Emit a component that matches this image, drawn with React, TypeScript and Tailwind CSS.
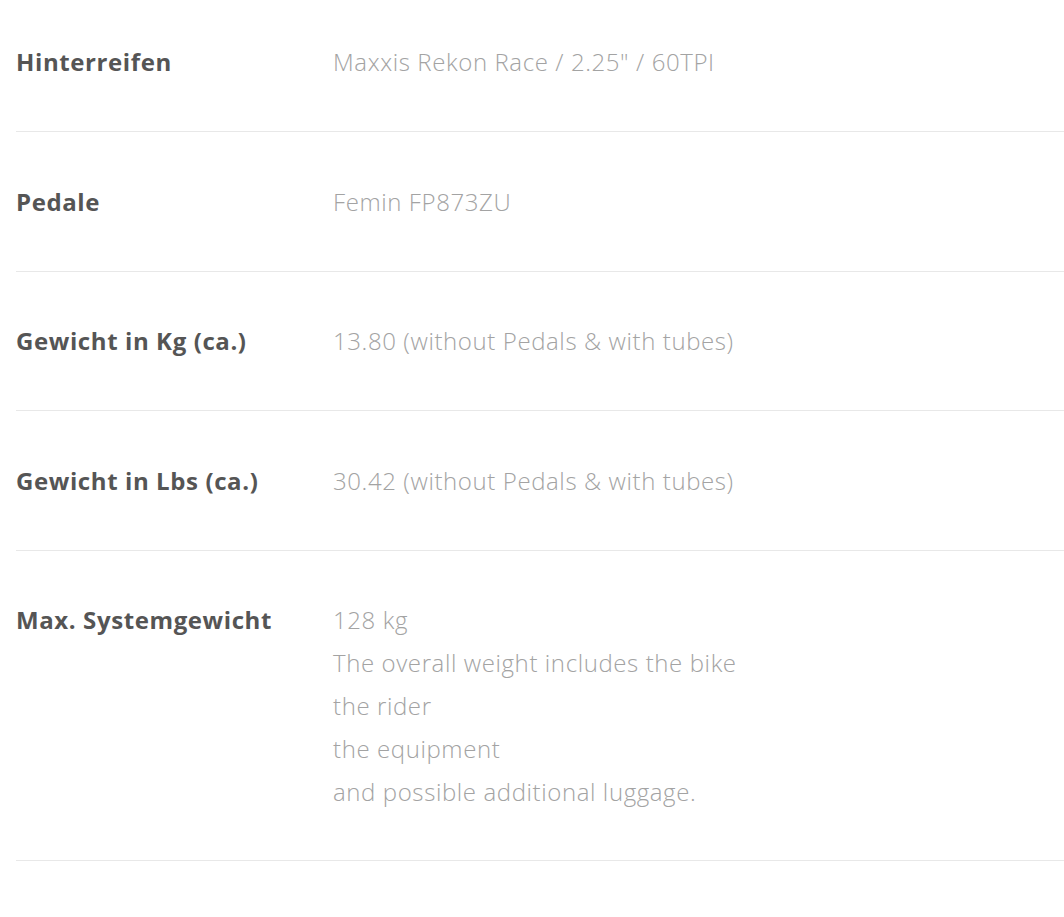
const rows: { label: string; value: string[] }[] = [
  { label: "Hinterreifen", value: ['Maxxis Rekon Race / 2.25" / 60TPI'] },
  { label: "Pedale", value: ["Femin FP873ZU"] },
  { label: "Gewicht in Kg (ca.)", value: ["13.80 (without Pedals & with tubes)"] },
  { label: "Gewicht in Lbs (ca.)", value: ["30.42 (without Pedals & with tubes)"] },
  {
    label: "Max. Systemgewicht",
    value: [
      "128 kg",
      "The overall weight includes the bike",
      "the rider",
      "the equipment",
      "and possible additional luggage.",
    ],
  },
];

export default function App() {
  return (
    <div className="min-h-[917px] bg-white pl-4 font-['Open_Sans',sans-serif] overflow-hidden">
      <div className="flex flex-col">
        {rows.map((r, i) => (
          <div
            key={r.label}
            className={`flex border-b border-[#e8e8e8] ${i === 0 ? "pt-[40px]" : "pt-[47.5px]"} ${i === rows.length - 1 ? "pb-[46.5px]" : "pb-[48px]"}`}
          >
            <div className="w-[317px] shrink-0 text-[24px] leading-[43px] tracking-[0.6px] font-bold text-[#555555]">
              {r.label}
            </div>
            <div className="flex flex-col text-[24px] leading-[43px] tracking-[0.6px] font-light text-[#a3a3a3]">
              {r.value.map((v) => (
                <span key={v}>{v}</span>
              ))}
            </div>
          </div>
        ))}
      </div>
    </div>
  );
}
